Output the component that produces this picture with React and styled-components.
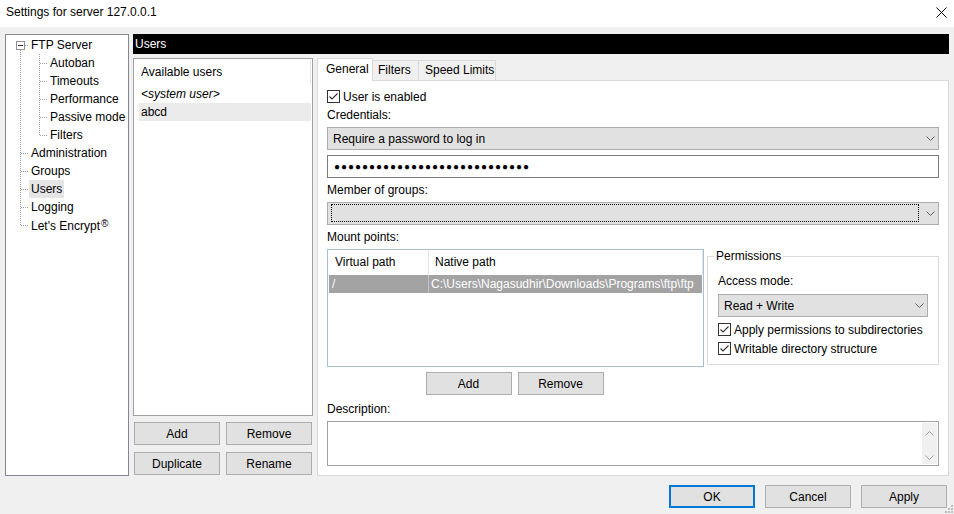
import React from 'react';
import styled, { createGlobalStyle } from 'styled-components';

const GlobalStyle = createGlobalStyle`
  html, body { margin: 0; padding: 0; background: #f0f0f0; }
  body {
    font-family: "Liberation Sans", Arial, sans-serif;
    font-size: 12px;
    color: #000;
  }
  *, *::before, *::after { box-sizing: border-box; }
`;

const Styles = {
    Window: styled.div`
        position: relative;
        width: 954px;
        height: 514px;
        display: flex;
        flex-direction: column;
        background: #f0f0f0;
        overflow: hidden;
    `,
    TitleBar: styled.div`
        flex: none;
        height: 27px;
        background: #fff;
        display: flex;
        align-items: center;
        justify-content: space-between;
        padding: 0 7px 3px 6px;
    `,
    Main: styled.div`
        flex: none;
        height: 449px;
        display: flex;
        gap: 4px;
        padding: 7px 5px 0;
    `,
    Tree: styled.div`
        flex: none;
        width: 124px;
        background: #fff;
        border: 1px solid #828790;
        padding: 1px 0 0 4px;
    `,
    TreeRow: styled.div`
        display: flex;
        align-items: center;
        height: 18px;
    `,
    TreeLabel: styled.span`
        padding: 0 2px;
        line-height: 18px;
        white-space: nowrap;
        background: ${({ selected }) => (selected ? '#e5e5e5' : 'transparent')};
    `,
    Reg: styled.span`
        font-size: 10px;
        vertical-align: 3px;
        margin-left: 1px;
    `,
    Right: styled.div`
        flex: 1;
        display: flex;
        flex-direction: column;
    `,
    SectionHeader: styled.div`
        flex: none;
        height: 20px;
        line-height: 20px;
        background: #000;
        color: #fff;
        padding-left: 2px;
    `,
    Content: styled.div`
        flex: 1;
        display: flex;
        gap: 4px;
        margin-top: 4px;
    `,
    UsersColumn: styled.div`
        flex: none;
        width: 180px;
        display: flex;
        flex-direction: column;
    `,
    UserList: styled.div`
        height: 358px;
        background: #fff;
        border: 1px solid #a0a0a0;
    `,
    UserHeader: styled.div`
        display: flex;
        height: 26px;
    `,
    UserHeaderCell: styled.div`
        width: 177px;
        padding-left: 7px;
        line-height: 27px;
        border-right: 1px solid #e8e8e8;
    `,
    UserRow: styled.div`
        height: 18px;
        line-height: 18px;
        margin: 0 1px 0 5px;
        padding-left: 2px;
        font-style: ${({ italic }) => (italic ? 'italic' : 'normal')};
        background: ${({ selected }) => (selected ? '#ebebeb' : 'transparent')};
    `,
    UserButtons: styled.div`
        display: grid;
        grid-template-columns: 86px 86px;
        column-gap: 6px;
        row-gap: 7px;
        padding: 0 1px;
        margin-top: 6px;
    `,
    Button: styled.button`
        width: ${({ width = '86px' }) => width};
        height: 23px;
        padding: 0;
        margin: 0;
        font: inherit;
        color: #000;
        background: #e1e1e1;
        border: ${({ primary }) => (primary ? '2px solid #0078d7' : '1px solid #adadad')};
        border-radius: 0;
    `,
    TabsColumn: styled.div`
        flex: 1;
        display: flex;
        flex-direction: column;
    `,
    TabStrip: styled.div`
        flex: none;
        height: 22px;
        display: flex;
        align-items: flex-end;
    `,
    Tab: styled.div`
        position: relative;
        z-index: ${({ active }) => (active ? 1 : 0)};
        width: ${({ width }) => width}px;
        height: ${({ active }) => (active ? 23 : 20)}px;
        margin-bottom: ${({ active }) => (active ? -1 : 0)}px;
        padding-left: ${({ pad }) => pad}px;
        line-height: ${({ active }) => (active ? 21 : 19)}px;
        background: ${({ active }) => (active ? '#fff' : '#f0f0f0')};
        border: 1px solid #d9d9d9;
        border-bottom: none;
        &:not(:first-child) { border-left: none; }
        white-space: nowrap;
    `,
    TabPanel: styled.div`
        flex: 1;
        display: flex;
        flex-direction: column;
        background: #fff;
        border: 1px solid #d9d9d9;
        padding: 8px 9px 0;
    `,
    CheckRow: styled.div`
        display: flex;
        align-items: center;
        gap: 3px;
        height: 15px;
        margin-top: ${({ mt = 0 }) => mt}px;
        white-space: nowrap;
    `,
    Label: styled.div`
        height: 15px;
        line-height: 15px;
        margin-top: ${({ mt = 0 }) => mt}px;
    `,
    Select: styled.div`
        flex: none;
        width: ${({ width }) => (width ? `${width}px` : '100%')};
        height: 23px;
        margin-top: ${({ mt = 0 }) => mt}px;
        display: flex;
        align-items: center;
        padding: 0 3px 0 5px;
        background: #e1e1e1;
        border: 1px solid #adadad;
    `,
    SelectText: styled.span`
        flex: 1;
    `,
    FocusRing: styled.span`
        flex: 1;
        align-self: stretch;
        margin: 1px 7px 2px -2px;
        border: 1px dotted #000;
    `,
    Password: styled.div`
        height: 23px;
        margin-top: ${({ mt = 0 }) => mt}px;
        display: flex;
        align-items: center;
        padding-left: 6px;
        background: #fff;
        border: 1px solid #7a7a7a;
        font-size: 10px;
        letter-spacing: 0.96px;
        white-space: nowrap;
        overflow: hidden;
    `,
    MountRow: styled.div`
        display: flex;
        gap: 3px;
        margin-top: 4px;
        height: 118px;
    `,
    ListView: styled.div`
        flex: none;
        width: 377px;
        height: 118px;
        background: #fff;
        border: 1px solid #a9bdd4;
        overflow: hidden;
    `,
    ListHeader: styled.div`
        display: flex;
        height: 25px;
    `,
    ListHeaderCell: styled.div`
        width: ${({ width }) => width}px;
        padding-left: ${({ pad }) => pad}px;
        line-height: 25px;
        border-right: 1px solid #e5e5e5;
        white-space: nowrap;
    `,
    ListRow: styled.div`
        display: flex;
        height: 18px;
        margin: 0 1px;
        background: #a3a3a3;
        color: #fff;
    `,
    ListCell: styled.div`
        flex: ${({ width }) => (width ? 'none' : 1)};
        width: ${({ width }) => (width ? `${width}px` : 'auto')};
        padding-left: ${({ pad }) => pad}px;
        line-height: 18px;
        white-space: nowrap;
        overflow: hidden;
        border-right: ${({ width }) => (width ? '1px solid #c4c4c4' : 'none')};
    `,
    Group: styled.fieldset`
        flex: none;
        align-self: flex-start;
        width: 232px;
        height: 116px;
        margin: 0;
        padding: 10px 10px 7px;
        min-width: 0;
        border: 1px solid #dcdcdc;
    `,
    Legend: styled.legend`
        padding: 0 2px;
        margin-left: -4px;
        line-height: 15px;
    `,
    MountButtons: styled.div`
        width: 377px;
        display: flex;
        justify-content: center;
        gap: 6px;
        margin-top: 5px;
        padding-right: 2px;
    `,
    TextArea: styled.div`
        height: 45px;
        margin-top: 4px;
        display: flex;
        justify-content: flex-end;
        padding: 1px;
        background: #fff;
        border: 1px solid #a0a0a0;
    `,
    Scrollbar: styled.div`
        width: 15px;
        display: flex;
        flex-direction: column;
        justify-content: space-between;
        align-items: center;
        padding: 8px 0 4px;
        background: #f0f0f0;
    `,
    Footer: styled.div`
        display: flex;
        justify-content: flex-end;
        gap: 10px;
        margin-top: 9px;
        padding-right: 7px;
    `,
    Grip: styled.svg`
        position: absolute;
        right: 1px;
        bottom: 1px;
    `
};

const CloseIcon = () => (
    <svg width="11" height="11" viewBox="0 0 11 11">
        <path d="M0.5 0.5 L10.5 10.5 M10.5 0.5 L0.5 10.5" stroke="#000" strokeWidth="1" fill="none" />
    </svg>
);

const Chevron = ({ up, color = '#606060' }) => (
    <svg width="9" height="5" viewBox="0 0 9 5" style={{ flex: 'none' }}>
        <path
            d={up ? 'M0.5 4.5 L4.5 0.5 L8.5 4.5' : 'M0.5 0.5 L4.5 4.5 L8.5 0.5'}
            stroke={color}
            strokeWidth="1"
            fill="none"
        />
    </svg>
);

const CheckBox = () => (
    <svg width="13" height="13" viewBox="0 0 13 13" style={{ flex: 'none' }}>
        <rect x="0.5" y="0.5" width="12" height="12" fill="#fff" stroke="#333" />
        <path d="M2.5 6.5 L5 9 L10.5 3.5" stroke="#333" strokeWidth="1.1" fill="none" />
    </svg>
);

// tree connector drawn per row: box, tee, elbow, pipe
const Guide = ({ kind }) => (
    <svg width="19" height="18" viewBox="0 0 19 18" style={{ flex: 'none' }}>
        {kind === 'box' && (
            <>
                <path d="M10.5 14 V18 M15 9.5 H19" stroke="#a0a0a0" strokeDasharray="1 1" />
                <rect x="6.5" y="5.5" width="8" height="8" fill="#fff" stroke="#919191" />
                <path d="M8 9.5 H13" stroke="#333" />
            </>
        )}
        {kind === 'tee' && <path d="M10.5 0 V18 M11 9.5 H19" stroke="#a0a0a0" strokeDasharray="1 1" />}
        {kind === 'elbow' && <path d="M10.5 0 V10 M11 9.5 H19" stroke="#a0a0a0" strokeDasharray="1 1" />}
        {kind === 'pipe' && <path d="M10.5 0 V18" stroke="#a0a0a0" strokeDasharray="1 1" />}
    </svg>
);

const TREE = [
    { guides: ['box'], label: 'FTP Server' },
    { guides: ['pipe', 'tee'], label: 'Autoban' },
    { guides: ['pipe', 'tee'], label: 'Timeouts' },
    { guides: ['pipe', 'tee'], label: 'Performance' },
    { guides: ['pipe', 'tee'], label: 'Passive mode' },
    { guides: ['pipe', 'elbow'], label: 'Filters' },
    { guides: ['tee'], label: 'Administration' },
    { guides: ['tee'], label: 'Groups' },
    { guides: ['tee'], label: 'Users', selected: true },
    { guides: ['tee'], label: 'Logging' },
    { guides: ['elbow'], label: "Let's Encrypt", reg: true }
];

const App = () => (
    <>
        <GlobalStyle />
        <Styles.Window>
            <Styles.TitleBar>
                <span>Settings for server 127.0.0.1</span>
                <CloseIcon />
            </Styles.TitleBar>

            <Styles.Main>
                <Styles.Tree>
                    {TREE.map((item) => (
                        <Styles.TreeRow key={item.label}>
                            {item.guides.map((g, i) => (
                                <Guide key={i} kind={g} />
                            ))}
                            <Styles.TreeLabel selected={item.selected}>
                                {item.label}
                                {item.reg && <Styles.Reg>®</Styles.Reg>}
                            </Styles.TreeLabel>
                        </Styles.TreeRow>
                    ))}
                </Styles.Tree>

                <Styles.Right>
                    <Styles.SectionHeader>Users</Styles.SectionHeader>
                    <Styles.Content>
                        <Styles.UsersColumn>
                            <Styles.UserList>
                                <Styles.UserHeader>
                                    <Styles.UserHeaderCell>Available users</Styles.UserHeaderCell>
                                </Styles.UserHeader>
                                <Styles.UserRow italic>&lt;system user&gt;</Styles.UserRow>
                                <Styles.UserRow selected>abcd</Styles.UserRow>
                            </Styles.UserList>
                            <Styles.UserButtons>
                                <Styles.Button>Add</Styles.Button>
                                <Styles.Button>Remove</Styles.Button>
                                <Styles.Button>Duplicate</Styles.Button>
                                <Styles.Button>Rename</Styles.Button>
                            </Styles.UserButtons>
                        </Styles.UsersColumn>

                        <Styles.TabsColumn>
                            <Styles.TabStrip>
                                <Styles.Tab active width={56} pad={8}>General</Styles.Tab>
                                <Styles.Tab width={46} pad={5}>Filters</Styles.Tab>
                                <Styles.Tab width={77} pad={6}>Speed Limits</Styles.Tab>
                            </Styles.TabStrip>
                            <Styles.TabPanel>
                                <Styles.CheckRow>
                                    <CheckBox />
                                    User is enabled
                                </Styles.CheckRow>
                                <Styles.Label mt={4}>Credentials:</Styles.Label>
                                <Styles.Select mt={4}>
                                    <Styles.SelectText>Require a password to log in</Styles.SelectText>
                                    <Chevron />
                                </Styles.Select>
                                <Styles.Password mt={5}>{'●'.repeat(28)}</Styles.Password>
                                <Styles.Label mt={5}>Member of groups:</Styles.Label>
                                <Styles.Select mt={4}>
                                    <Styles.FocusRing />
                                    <Chevron />
                                </Styles.Select>
                                <Styles.Label mt={5}>Mount points:</Styles.Label>

                                <Styles.MountRow>
                                    <Styles.ListView>
                                        <Styles.ListHeader>
                                            <Styles.ListHeaderCell width={101} pad={7}>Virtual path</Styles.ListHeaderCell>
                                            <Styles.ListHeaderCell width={274} pad={6}>Native path</Styles.ListHeaderCell>
                                        </Styles.ListHeader>
                                        <Styles.ListRow>
                                            <Styles.ListCell width={100} pad={3}>/</Styles.ListCell>
                                            <Styles.ListCell pad={2}>
                                                C:\Users\Nagasudhir\Downloads\Programs\ftp\ftp
                                            </Styles.ListCell>
                                        </Styles.ListRow>
                                    </Styles.ListView>

                                    <Styles.Group>
                                        <Styles.Legend>Permissions</Styles.Legend>
                                        <Styles.Label>Access mode:</Styles.Label>
                                        <Styles.Select width={210} mt={5}>
                                            <Styles.SelectText>Read + Write</Styles.SelectText>
                                            <Chevron />
                                        </Styles.Select>
                                        <Styles.CheckRow mt={5}>
                                            <CheckBox />
                                            Apply permissions to subdirectories
                                        </Styles.CheckRow>
                                        <Styles.CheckRow mt={4}>
                                            <CheckBox />
                                            Writable directory structure
                                        </Styles.CheckRow>
                                    </Styles.Group>
                                </Styles.MountRow>

                                <Styles.MountButtons>
                                    <Styles.Button>Add</Styles.Button>
                                    <Styles.Button>Remove</Styles.Button>
                                </Styles.MountButtons>

                                <Styles.Label mt={7}>Description:</Styles.Label>
                                <Styles.TextArea>
                                    <Styles.Scrollbar>
                                        <Chevron up color="#a3a3a3" />
                                        <Chevron color="#a3a3a3" />
                                    </Styles.Scrollbar>
                                </Styles.TextArea>
                            </Styles.TabPanel>
                        </Styles.TabsColumn>
                    </Styles.Content>
                </Styles.Right>
            </Styles.Main>

            <Styles.Footer>
                <Styles.Button primary>OK</Styles.Button>
                <Styles.Button>Cancel</Styles.Button>
                <Styles.Button>Apply</Styles.Button>
            </Styles.Footer>

            <Styles.Grip width="8" height="8" viewBox="0 0 8 8">
                {[[6, 0], [6, 3], [3, 3], [6, 6], [3, 6], [0, 6]].map(([x, y]) => (
                    <rect key={`${x}-${y}`} x={x} y={y} width="2" height="2" fill="#bcbcbc" />
                ))}
            </Styles.Grip>
        </Styles.Window>
    </>
);

export default App;
